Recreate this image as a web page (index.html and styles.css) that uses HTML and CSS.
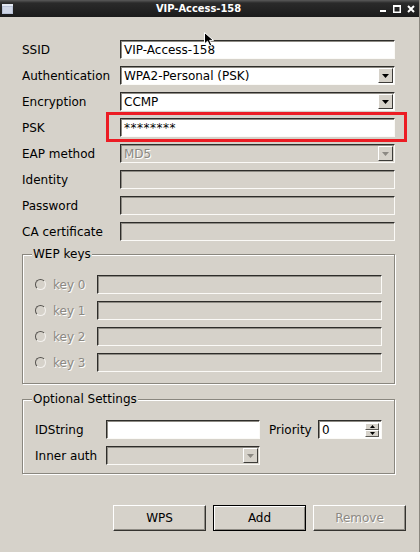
FILE: index.html
```html
<!DOCTYPE html>
<html lang="en">
<head>
    <meta charset="UTF-8">
    <meta name="viewport" content="width=device-width, initial-scale=1.0">
    <title>VIP-Access-158</title>
    <link rel="stylesheet" href="styles.css">
</head>
<body>

<div class="window">
    <!-- Barra de titulo -->
    <div class="titlebar">
        <svg class="app-icon" width="11" height="10" viewBox="0 0 11 10">
            <rect x="0" y="0" width="11" height="10" fill="#b9c2d6"/>
            <rect x="0" y="0" width="11" height="2" fill="#e4e9f3"/>
            <rect x="1" y="3" width="9" height="6" fill="#cfd6e6"/>
        </svg>
        <div class="title">VIP-Access-158</div>
        <div class="controls">
            <svg width="7" height="8" viewBox="0 0 7 8"><rect x="0" y="5" width="6" height="2" fill="#fff"/></svg>
            <svg width="8" height="8" viewBox="0 0 8 8"><rect x="0.75" y="0.75" width="6.5" height="6.5" fill="none" stroke="#fff" stroke-width="1.5"/><rect x="0" y="0" width="8" height="2" fill="#fff"/></svg>
            <svg width="8" height="8" viewBox="0 0 8 8"><path d="M1 1 L7 7 M7 1 L1 7" stroke="#fff" stroke-width="2"/></svg>
        </div>
    </div>

    <div class="content">
        <!-- Datos de la red -->
        <div class="form">
            <label>SSID</label>
            <div class="field">VIP-Access-158</div>

            <label>Authentication</label>
            <div class="field combo">
                <span class="value">WPA2-Personal (PSK)</span>
                <span class="arrow"><svg width="7" height="4" viewBox="0 0 7 4"><path d="M0 0h7L3.5 4z"/></svg></span>
            </div>

            <label>Encryption</label>
            <div class="field combo">
                <span class="value">CCMP</span>
                <span class="arrow"><svg width="7" height="4" viewBox="0 0 7 4"><path d="M0 0h7L3.5 4z"/></svg></span>
            </div>

            <label>PSK</label>
            <div class="field psk">********</div>

            <label>EAP method</label>
            <div class="field combo off">
                <span class="value">MD5</span>
                <span class="arrow"><svg width="7" height="4" viewBox="0 0 7 4"><path d="M0 0h7L3.5 4z"/></svg></span>
            </div>

            <label>Identity</label>
            <div class="field off"></div>

            <label>Password</label>
            <div class="field off"></div>

            <label>CA certificate</label>
            <div class="field off"></div>
        </div>

        <!-- Claves WEP -->
        <fieldset class="group">
            <legend>WEP keys</legend>
            <div class="keys">
                <div class="key"><span class="radio"></span>key 0</div>
                <div class="field off"></div>
                <div class="key"><span class="radio"></span>key 1</div>
                <div class="field off"></div>
                <div class="key"><span class="radio"></span>key 2</div>
                <div class="field off"></div>
                <div class="key"><span class="radio"></span>key 3</div>
                <div class="field off"></div>
            </div>
        </fieldset>

        <!-- Opciones -->
        <fieldset class="group optional">
            <legend>Optional Settings</legend>
            <div class="opt-row">
                <span class="opt-label">IDString</span>
                <div class="field opt-field"></div>
                <span class="prio">Priority</span>
                <div class="field spin">
                    <span class="value">0</span>
                    <span class="spin-btns">
                        <span class="spin-btn"><svg width="5" height="3" viewBox="0 0 5 3"><path d="M0 3h5L2.5 0z"/></svg></span>
                        <span class="spin-btn"><svg width="5" height="3" viewBox="0 0 5 3"><path d="M0 0h5L2.5 3z"/></svg></span>
                    </span>
                </div>
            </div>
            <div class="opt-row">
                <span class="opt-label">Inner auth</span>
                <div class="field combo off opt-field">
                    <span class="value"></span>
                    <span class="arrow"><svg width="7" height="4" viewBox="0 0 7 4"><path d="M0 0h7L3.5 4z"/></svg></span>
                </div>
            </div>
        </fieldset>
    </div>

    <div class="buttons">
        <button class="btn">WPS</button>
        <button class="btn default">Add</button>
        <button class="btn disabled">Remove</button>
    </div>

    <!-- Marca roja sobre el PSK -->
    <div class="highlight"></div>

    <svg class="cursor" width="11" height="15" viewBox="0 0 11 15">
        <path d="M0.5 0.5 V12 L3.5 9.2 L5.8 14 L7.8 13 L5.6 8.4 H9.5 Z" fill="#000" stroke="#fff" stroke-width="1"/>
    </svg>
</div>

</body>
</html>
```

FILE: styles.css
```css
body {
    margin: 0;
    background-color: #d6d2ca;
    font-family: "DejaVu Sans", sans-serif;
    font-size: 12px;
    color: #000;
}
.window {
    position: relative;
    width: 420px;
    height: 552px;
    overflow: hidden;
    box-sizing: border-box;
    border-right: 1px solid #8a877f;
}

/* Barra de titulo */
.titlebar {
    height: 17px;
    display: flex;
    align-items: center;
    background: linear-gradient(#5a5a5a, #2a2a2a 3px, #1b1b1b);
    color: #fff;
}
.app-icon {
    margin: 0 4px 0 2px;
}
.title {
    flex: 1;
    text-align: center;
    font-family: "DejaVu Sans Condensed", "DejaVu Sans", sans-serif;
    font-weight: bold;
    font-size: 11px;
}
.controls {
    display: flex;
    align-items: center;
    gap: 6px;
    padding-right: 4px;
}

.content {
    padding: 23px 24px 0 22px;
}
.form {
    display: grid;
    grid-template-columns: 98px 1fr;
    grid-auto-rows: 19px;
    row-gap: 7px;
    align-items: center;
}

/* Campos hundidos */
.field {
    box-sizing: border-box;
    height: 19px;
    display: flex;
    align-items: center;
    padding: 0 1px 0 3px;
    border: 1px solid;
    border-color: #2e2d2a #fbfaf7 #fbfaf7 #2e2d2a;
    box-shadow: inset 1px 1px 0 #8e8b84;
    background-color: #fff;
    white-space: nowrap;
    overflow: hidden;
}
.field.off {
    background-color: transparent;
    color: #8c8983;
    text-shadow: 1px 1px 0 #fff;
}
.value {
    flex: 1;
}
.arrow {
    width: 15px;
    height: 15px;
    box-sizing: border-box;
    display: flex;
    align-items: center;
    justify-content: center;
    border: 1px solid;
    border-color: #fff #3d3c39 #3d3c39 #fff;
    background-color: #d6d2ca;
}
.arrow svg {
    fill: #000;
    margin-top: 1px;
}
.off .arrow svg {
    fill: #8c8983;
}
.psk {
    letter-spacing: 0.5px;
}

/* Grupos */
.group {
    margin: 6px 0 0;
    padding: 13px 12px 11px 9px;
    border: 1px solid #8a877f;
    box-shadow: inset 1px 1px 0 #fff, 1px 1px 0 #fff;
    min-width: 0;
}
.group legend {
    padding: 0 1px;
    line-height: 15px;
    background-color: #d6d2ca;
}
.keys {
    display: grid;
    grid-template-columns: 65px 1fr;
    grid-auto-rows: 19px;
    row-gap: 7px;
    align-items: center;
}
.key {
    display: flex;
    align-items: center;
    gap: 7px;
    padding-left: 3px;
    color: #8c8983;
    text-shadow: 1px 1px 0 #fff;
}
.radio {
    width: 11px;
    height: 11px;
    box-sizing: border-box;
    border-radius: 50%;
    border: 1px solid;
    border-color: #55534f #f4f2ee #f4f2ee #55534f;
}

.optional {
    margin-top: 8px;
    padding-bottom: 8px;
}
.opt-row {
    display: flex;
    align-items: center;
    height: 19px;
}
.opt-row + .opt-row {
    margin-top: 7px;
}
.opt-label {
    width: 71px;
    padding-left: 3px;
}
.opt-field {
    width: 154px;
}
.prio {
    margin-left: 9px;
    width: 49px;
}
.spin {
    width: 64px;
}
.spin-btns {
    display: flex;
    flex-direction: column;
    width: 14px;
    margin-right: 1px;
}
.spin-btn {
    height: 7px;
    display: flex;
    align-items: center;
    justify-content: center;
    box-sizing: border-box;
    border: 1px solid;
    border-color: #fff #5a5853 #5a5853 #fff;
    background-color: #d6d2ca;
}
.spin-btn svg {
    fill: #000;
}

/* Botones */
.buttons {
    display: flex;
    justify-content: flex-end;
    gap: 7px;
    padding-right: 13px;
    margin-top: 31px;
}
.btn {
    width: 93px;
    height: 26px;
    box-sizing: border-box;
    padding: 0;
    border: 1px solid;
    border-color: #fff #34332f #34332f #fff;
    box-shadow: inset -1px -1px 0 #8e8b84;
    background-color: #d6d2ca;
    font-family: "DejaVu Sans", sans-serif;
    font-size: 12px;
    color: #000;
}
.btn.default {
    border-color: #000;
    box-shadow: inset 1px 1px 0 #fff, inset -1px -1px 0 #8e8b84;
}
.btn.disabled {
    color: #8c8983;
    text-shadow: 1px 1px 0 #fff;
}

.highlight {
    position: absolute;
    left: 106px;
    top: 112px;
    width: 301px;
    height: 30px;
    box-sizing: border-box;
    border: 3px solid #ec1c24;
}
.cursor {
    position: absolute;
    left: 204px;
    top: 32px;
}
```
